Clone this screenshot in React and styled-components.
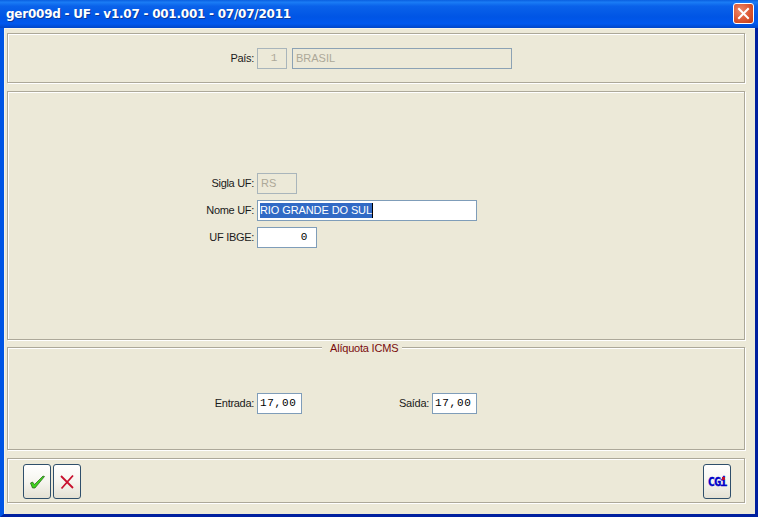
import React from 'react';
import styled, { createGlobalStyle } from 'styled-components';

const Global = createGlobalStyle`
  html, body { margin: 0; padding: 0; background: #fff; }
  body { font-family: "Liberation Sans", Arial, sans-serif; font-size: 11px; color: #000; }
`;

const Window = styled.div`
  width: 758px; height: 517px; box-sizing: border-box;
  display: flex; flex-direction: column;
  background: #00209f;
`;
const TitleBar = styled.div`
  height: 28px; flex: none; box-sizing: border-box;
  display: flex; align-items: center; justify-content: space-between;
  padding: 0 4px 1px 6px;
  background: linear-gradient(180deg, #0a5fe0 0%, #1a7cf5 8%, #0a62ea 22%, #0055e5 60%, #0058ee 85%, #0046c8 100%);
`;
const Title = styled.div`
  font-family: "DejaVu Sans", sans-serif; font-weight: bold; font-size: 12px;
  color: #fff; text-shadow: 1px 1px 0 #0a3a9c; letter-spacing: -0.02em;
`;
const CloseButton = styled.div`
  width: 21px; height: 21px; box-sizing: border-box;
  border: 1px solid #fff; border-radius: 3px;
  background: radial-gradient(circle at 35% 35%, #ec8a6c 0%, #dd5a36 50%, #c03a14 100%);
  display: flex; align-items: center; justify-content: center;
`;
const Client = styled.div`
  flex: 1; min-height: 0; box-sizing: border-box;
  border-left: 4px solid #0055e5;
  border-right: 3px solid #00209f;
  border-bottom: 3px solid #00209f;
  background: #ece9d8;
  box-shadow: inset 1px 1px 0 #f6f4ea;
  padding: 5px 10px 0 3px;
  display: flex; flex-direction: column;
`;
const Panel = styled.div`
  position: relative; box-sizing: border-box; flex: none;
  height: ${p => p.$h}px;
  margin-top: ${p => p.$mt || 0}px;
  padding-top: ${p => p.$pt || 0}px;
  border: 1px solid #aca899;
  box-shadow: inset 1px 1px 0 #fff, 1px 1px 0 #fff;
  display: flex; flex-direction: column;
`;
const FormStack = styled.div`
  display: flex; flex-direction: column; gap: 6.5px;
`;
const Row = styled.div`
  display: grid;
  grid-template-columns: ${p => p.$cols || '246px auto'};
  column-gap: 3px;
  align-items: center;
  justify-content: start;
`;
const FieldGroup = styled.div`
  display: flex; gap: 5px;
`;
const Label = styled.div`
  text-align: right; font-size: 11px; letter-spacing: -0.3px; color: #1a1a1a;
`;
const Field = styled.div`
  box-sizing: border-box;
  width: ${p => p.$w}px; height: 20.5px;
  border: 1px solid ${p => p.$off ? (p.$strong ? '#8ca2b4' : '#a9b5bb') : '#7f9db9'};
  background: ${p => p.$off ? '#ece9d8' : '#fff'};
  color: ${p => p.$off ? '#aca899' : '#000'};
  font-family: ${p => p.$mono ? '"Liberation Mono", monospace' : '"Liberation Sans", sans-serif'};
  font-size: 11px;
  letter-spacing: ${p => p.$mono ? '0.7px' : '0'};
  line-height: 18px;
  padding: 0 ${p => p.$right ? '8px' : '2px'} 0 ${p => p.$off ? '3px' : '2px'};
  text-align: ${p => p.$right ? 'right' : 'left'};
  white-space: nowrap; overflow: hidden;
`;
const Selected = styled.span`
  display: inline-block; height: 15px; line-height: 15px;
  background: #316ac5; color: #fff;
  border-right: 1px solid #000;
  letter-spacing: -0.1px;
  margin-top: 1px;
`;
const Legend = styled.div`
  position: absolute; top: -7px; left: 314px;
  padding: 0 4px 0 8px;
  background: #ece9d8; color: #7a0c0c;
  font-size: 11px; letter-spacing: -0.2px; line-height: 14px;
`;
const ButtonBar = styled.div`
  display: flex; align-items: flex-start; gap: 2px;
  padding: 5px 13px 0 15px;
`;
const ToolButton = styled.div`
  width: 28px; height: 35px; box-sizing: border-box;
  margin-left: ${p => p.$push ? 'auto' : '0'};
  border: 1px solid #2f4f6b; border-radius: 3px;
  background: linear-gradient(180deg, #fff 0%, #f6f5ef 50%, #e4e1d4 100%);
  display: flex; align-items: center; justify-content: center;
`;
const Cgi = styled.span`
  position: relative;
  font-family: "DejaVu Sans Mono", monospace; font-weight: bold;
  font-size: 12px; letter-spacing: -1px; color: #0000c8;
  -webkit-text-stroke: 0.3px #0000c8;
  &::after {
    content: ""; position: absolute; right: 1px; top: 2px;
    width: 3px; height: 3px; background: #c01030;
  }
`;

export default function App() {
  return (
    <>
      <Global />
      <Window>
        <TitleBar>
          <Title>ger009d - UF - v1.07 - 001.001 - 07/07/2011</Title>
          <CloseButton>
            <svg width="13" height="13" viewBox="0 0 13 13">
              <path d="M2 2 L11 11 M11 2 L2 11" stroke="#fff" strokeWidth="2" strokeLinecap="square" />
            </svg>
          </CloseButton>
        </TitleBar>
        <Client>
          <Panel $h={50} $pt={14}>
            <Row>
              <Label>País:</Label>
              <FieldGroup>
                <Field $off $mono $right $w={30}>1</Field>
                <Field $off $strong $w={220}>BRASIL</Field>
              </FieldGroup>
            </Row>
          </Panel>
          <Panel $h={249} $mt={8} $pt={81}>
            <FormStack>
              <Row>
                <Label>Sigla UF:</Label>
                <Field $off $w={40}>RS</Field>
              </Row>
              <Row>
                <Label>Nome UF:</Label>
                <Field $w={220}><Selected>RIO GRANDE DO SUL</Selected></Field>
              </Row>
              <Row>
                <Label>UF IBGE:</Label>
                <Field $mono $right $w={60}>0</Field>
              </Row>
            </FormStack>
          </Panel>
          <Panel $h={103} $mt={7} $pt={45}>
            <Legend>Alíquota ICMS</Legend>
            <Row $cols="246px 45px 124px 45px">
              <Label>Entrada:</Label>
              <Field $mono $w={45}>17,00</Field>
              <Label>Saída:</Label>
              <Field $mono $w={45}>17,00</Field>
            </Row>
          </Panel>
          <Panel $h={45} $mt={8}>
            <ButtonBar>
              <ToolButton>
                <svg width="15" height="14" viewBox="0 0 15 14">
                  <path d="M0.5 8 L2.5 7 L4.5 9.5 L13 1 L14.5 1.5 L5 13 L2.5 13 Z" fill="#3fd01e" stroke="#1f5f12" strokeWidth="0.7" />
                </svg>
              </ToolButton>
              <ToolButton>
                <svg width="16" height="16" viewBox="0 0 16 16">
                  <path d="M2 2 L14 14 M14 1.5 L2.5 14.5" stroke="#c8102e" strokeWidth="1.8" fill="none" />
                </svg>
              </ToolButton>
              <ToolButton $push><Cgi>CGi</Cgi></ToolButton>
            </ButtonBar>
          </Panel>
        </Client>
      </Window>
    </>
  );
}
